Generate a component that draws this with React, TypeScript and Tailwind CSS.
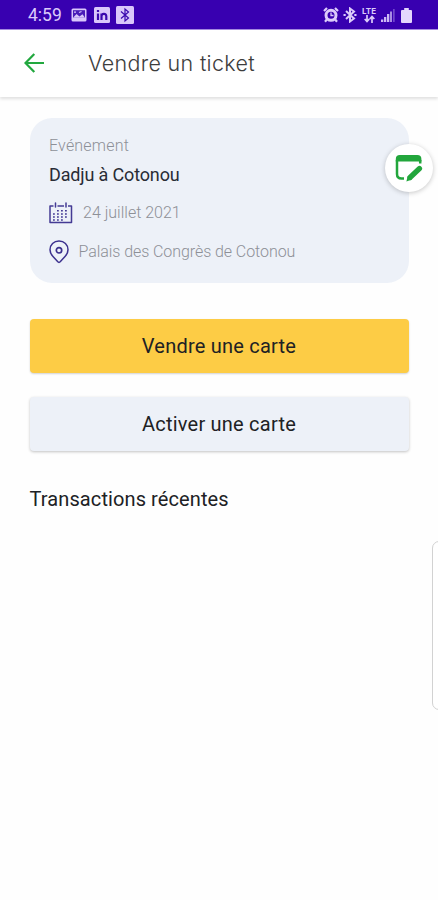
import type { ReactNode } from "react";

const PictureIcon = () => (
  <svg width="16" height="14" viewBox="0 0 16 14" fill="none">
    <rect x="0.5" y="0.5" width="15" height="13" rx="1.5" fill="#d9c6fb" />
    <rect x="2" y="2.2" width="12" height="7.6" fill="#4a1cb8" />
    <path d="M2 9.8 5.5 6l3 2.5 3-2.2L14 9.8z" fill="#d9c6fb" />
    <path d="M3 4.2h2M8 4.5l2.5-1" stroke="#d9c6fb" strokeWidth="1.2" />
  </svg>
);

const LinkedinIcon = () => (
  <svg width="16" height="16" viewBox="0 0 16 16" fill="none">
    <rect width="16" height="16" rx="1.5" fill="#d9c6fb" />
    <path
      d="M4 6.5V13M4 3v2M7.5 13V6.5M7.5 9.3c0-3 4.8-3.4 4.8 0V13"
      stroke="#3a08ae"
      strokeWidth="2.2"
    />
  </svg>
);

const BluetoothBoxIcon = () => (
  <svg width="18" height="18" viewBox="0 0 18 18" fill="none">
    <rect width="18" height="18" rx="1.5" fill="#d9c6fb" />
    <path d="m5 5.5 7.5 6.5L9 15V3l3.5 3L5 12.5" stroke="#3a08ae" strokeWidth="1.2" />
  </svg>
);

const AlarmIcon = () => (
  <svg width="16" height="16" viewBox="0 0 16 16" fill="none" stroke="#dccbfb">
    <circle cx="8" cy="8.3" r="5" strokeWidth="3" />
    <path d="M8 5.5v3h2.5" strokeWidth="1.3" />
    <path d="m1 4 3-3M15 4l-3-3M3.8 12.5 2 14.7M12.2 12.5l1.8 2.2" strokeWidth="2.2" />
  </svg>
);

const BluetoothIcon = () => (
  <svg width="14" height="16" viewBox="0 0 14 16" fill="none" stroke="#dccbfb">
    <path d="m3 4 8 7.5-4 3v-13l4 3L3 12" strokeWidth="2" />
    <path d="M.5 8h2.2M11.3 8h2.2" strokeWidth="2" />
  </svg>
);

const LteIcon = () => (
  <div className="flex w-4 flex-col items-center">
    <span className="font-['Inter',sans-serif] text-[8px] leading-[8px] font-bold">LTE</span>
    <svg width="11" height="8" viewBox="0 0 11 8" fill="none" stroke="#dccbfb" strokeWidth="1.7">
      <path d="M3 0v6M.7 4 3 6.5 5.3 4M8 8V2M5.7 4 8 1.5 10.3 4" />
    </svg>
  </div>
);

const SignalIcon = () => (
  <svg width="14" height="14" viewBox="0 0 14 14">
    <path d="M0 11.5h2.3V14H0zM3 9h2.3v5H3zM6 6h2.3v8H6z" fill="#cdb9f4" />
    <path d="M9 3.5h2V14H9z" fill="#a88ce4" />
    <path d="M12 1h1.7v13H12z" fill="#6f45cc" />
  </svg>
);

const BatteryIcon = () => (
  <svg width="11" height="15" viewBox="0 0 11 15" fill="#e4d7fc">
    <path d="M3.2 0h4.6v2H10q1 0 1 1v11q0 1-1 1H1q-1 0-1-1V3q0-1 1-1h2.2z" />
  </svg>
);

const BackIcon = () => (
  <svg width="20" height="20" viewBox="0 0 20 20" fill="none" stroke="#22a83f" strokeWidth="2.2">
    <path d="M10.3 1 1.5 10l8.8 9M1.5 10H20" />
  </svg>
);

const CalendarIcon = () => (
  <svg width="24" height="22" viewBox="0 0 24 22" fill="none" stroke="#443b94">
    <path d="M4.5 4H1v16.5h21.5V4H19M8.5 4h6.5" strokeWidth="1.5" strokeLinejoin="round" />
    <path d="M6.5 1v4M17 1v4" strokeWidth="1.5" strokeLinecap="round" />
    <path
      d="M8 8.7h12M4 12h16M4 15h16M4 18h12"
      strokeWidth="1.5"
      strokeDasharray="1.8 2.2"
    />
  </svg>
);

const PinIcon = () => (
  <svg width="20" height="24" viewBox="0 0 20 24" fill="none" stroke="#3c318e">
    <path
      d="M10 1C4.8 1 1 4.8 1 9.7c0 2.7 1.1 4.8 3 6.9l4.8 5.2q1.2 1.2 2.4 0l4.8-5.2c1.9-2.1 3-4.2 3-6.9C19 4.8 15.2 1 10 1Z"
      strokeWidth="1.5"
    />
    <circle cx="10" cy="10.3" r="2.7" strokeWidth="1.7" />
  </svg>
);

const EditIcon = () => (
  <svg width="28" height="28" viewBox="0 0 28 28" fill="none" stroke="#22a63c">
    <path d="M9 24.5H6.5Q2 24.5 2 20V6M25.2 6v3.5" strokeWidth="2.5" />
    <path d="M.8 7.5V5q0-4 4-4h17.6q4 0 4 4v2.5z" fill="#22a63c" stroke="none" />
    <path d="m24.5 14.5-9.5 9" strokeWidth="5.2" strokeLinecap="round" />
    <path d="m12.8 22-1.4 5.6 5.6-2z" fill="#22a63c" stroke="none" />
  </svg>
);

function StatusBar() {
  return (
    <header className="flex h-[30px] items-center border-b border-[#a58ae0] bg-[#3800b0] pr-[26px] pl-7 text-[#dccbfb]">
      <span className="w-[43px] pt-0.5 text-[17.5px] whitespace-nowrap">4:59</span>
      <div className="flex flex-1 items-center gap-[6.5px] pt-px">
        <PictureIcon />
        <LinkedinIcon />
        <BluetoothBoxIcon />
      </div>
      <div className="flex items-center gap-1 pt-px">
        <AlarmIcon />
        <BluetoothIcon />
        <LteIcon />
        <SignalIcon />
        <span className="pl-0.5">
          <BatteryIcon />
        </span>
      </div>
    </header>
  );
}

function ActionButton({ className, children }: { className: string; children: ReactNode }) {
  return (
    <button
      className={`flex h-[54px] w-full items-center justify-center rounded pb-px text-[20px] tracking-[0.22px] text-[#202124] ${className}`}
    >
      {children}
    </button>
  );
}

export default function App() {
  return (
    <div className="relative h-[900px] w-[438px] overflow-hidden bg-[#fefefe] font-['Roboto',sans-serif]">
      <StatusBar />

      <div className="flex h-[67px] items-center bg-white pb-px pl-6 shadow-[0_2px_3px_rgba(0,0,0,0.12)]">
        <BackIcon />
        <h1 className="ml-11 font-['Inter',sans-serif] text-[21.5px] font-light tracking-[0.32px] text-[#3d3d3d]">
          Vendre un ticket
        </h1>
      </div>

      <main className="px-[29.5px] pt-[21px]">
        <section className="relative h-[165px] rounded-[22px] bg-[#edf1f8] pt-[17px] pl-[19.5px]">
          <p className="text-[16px] leading-[22px] font-light tracking-[0.2px] text-[#8d9097]">Evénement</p>
          <h2 className="mt-[7px] text-[18px] leading-[22px] tracking-[-0.15px] text-[#292c35]">
            Dadju à Cotonou
          </h2>
          <div className="mt-[15px] flex h-6 items-center">
            <CalendarIcon />
            <span className="ml-[10px] text-[16px] font-light text-[#8d9097]">24 juillet 2021</span>
          </div>
          <div className="mt-[15px] flex h-6 items-center">
            <PinIcon />
            <span className="ml-[9.5px] text-[16px] font-light tracking-[-0.07px] text-[#8d9097]">
              Palais des Congrès de Cotonou
            </span>
          </div>
          <button className="absolute top-[26px] right-[-24.5px] flex h-12 w-12 items-center justify-center rounded-full bg-white shadow-[0_1px_5px_rgba(0,0,0,0.22)]">
            <EditIcon />
          </button>
        </section>

        <div className="mt-9 flex flex-col gap-6">
          <ActionButton className="bg-[#fdcc45] shadow-[0_1px_2px_rgba(0,0,0,0.18)]">
            Vendre une carte
          </ActionButton>
          <ActionButton className="bg-[#edf1f8] shadow-[0_1px_3px_rgba(0,0,0,0.24)]">
            Activer une carte
          </ActionButton>
        </div>

        <h3 className="mt-[34px] text-[20px] leading-7 tracking-[0.1px] text-[#202124]">
          Transactions récentes
        </h3>
      </main>

      {/* edge panel handle */}
      <div className="absolute top-[541px] -right-2 h-[169px] w-[14px] rounded-lg border border-[#d2d2d2] bg-white" />
    </div>
  );
}
